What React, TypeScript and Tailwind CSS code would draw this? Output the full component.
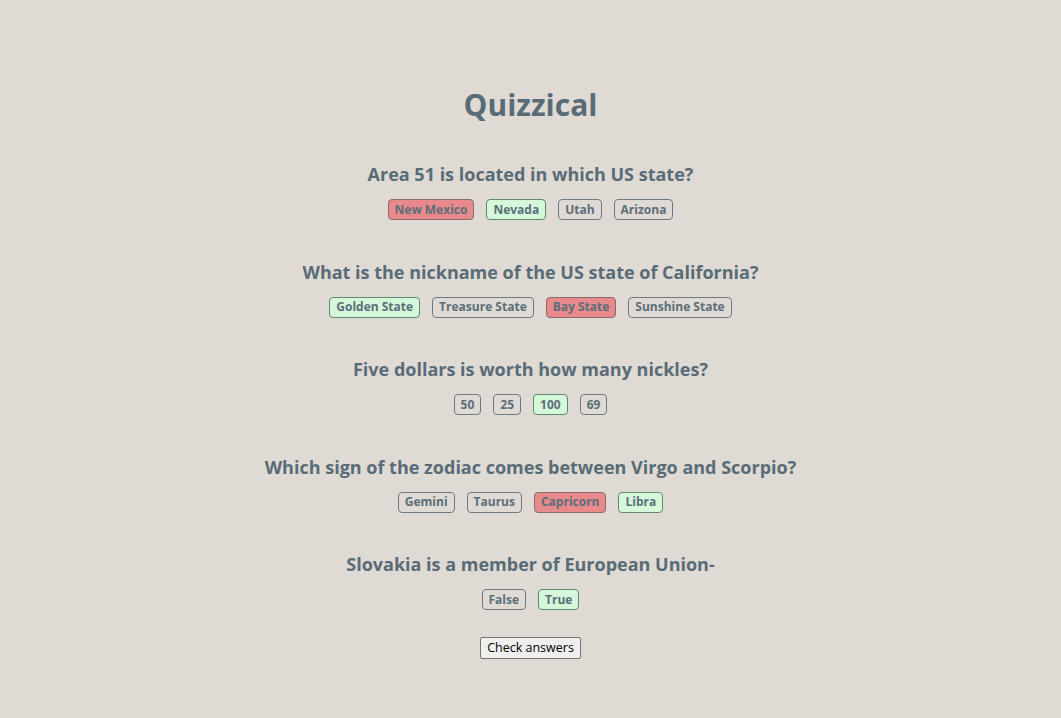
const questions = [
  {
    q: 'Area 51 is located in which US state?',
    options: [
      { text: 'New Mexico', state: 'wrong' },
      { text: 'Nevada', state: 'right' },
      { text: 'Utah', state: '' },
      { text: 'Arizona', state: '' },
    ],
  },
  {
    q: 'What is the nickname of the US state of California?',
    options: [
      { text: 'Golden State', state: 'right' },
      { text: 'Treasure State', state: '' },
      { text: 'Bay State', state: 'wrong' },
      { text: 'Sunshine State', state: '' },
    ],
  },
  {
    q: 'Five dollars is worth how many nickles?',
    options: [
      { text: '50', state: '' },
      { text: '25', state: '' },
      { text: '100', state: 'right' },
      { text: '69', state: '' },
    ],
  },
  {
    q: 'Which sign of the zodiac comes between Virgo and Scorpio?',
    options: [
      { text: 'Gemini', state: '' },
      { text: 'Taurus', state: '' },
      { text: 'Capricorn', state: 'wrong' },
      { text: 'Libra', state: 'right' },
    ],
  },
  {
    q: 'Slovakia is a member of European Union-',
    options: [
      { text: 'False', state: '' },
      { text: 'True', state: 'right' },
    ],
  },
];

const Option = ({ text, state }: { text: string; state: string }) => {
  const cls =
    state === 'right'
      ? 'bg-[#d5f7da] border-[#5f8a6c]'
      : state === 'wrong'
      ? 'bg-[#e88a8c] border-[#8a6a6c]'
      : 'bg-transparent border-[#6d7a82]';
  return (
    <span className={`border rounded-[4px] px-[6px] h-[21px] flex items-center text-[12px] font-bold text-[#5b6e79] ${cls}`}>
      {text}
    </span>
  );
};

export default function App() {
  return (
    <div
      className="min-h-[718px] bg-[#e0dad4] flex flex-col items-center pt-[86px] text-[#586c78]"
      style={{ fontFamily: '"Open Sans", "Noto Sans", sans-serif' }}
    >
      <h1 className="text-[30px] leading-[38px] font-bold">Quizzical</h1>
      <div className="flex flex-col items-center gap-[39.5px] mt-[38px]">
        {questions.map((item) => (
          <div key={item.q} className="flex flex-col items-center">
            <h2 className="text-[18px] leading-[24px] font-bold">{item.q}</h2>
            <div className="flex gap-[12px] mt-[13px]">
              {item.options.map((o) => (
                <Option key={o.text} text={o.text} state={o.state} />
              ))}
            </div>
          </div>
        ))}
      </div>
      <button className="mt-[27px] h-[22px] px-[6px] text-[12.5px] text-black bg-[#efefef] border border-[#767676] rounded-[2px]">
        Check answers
      </button>
    </div>
  );
}
